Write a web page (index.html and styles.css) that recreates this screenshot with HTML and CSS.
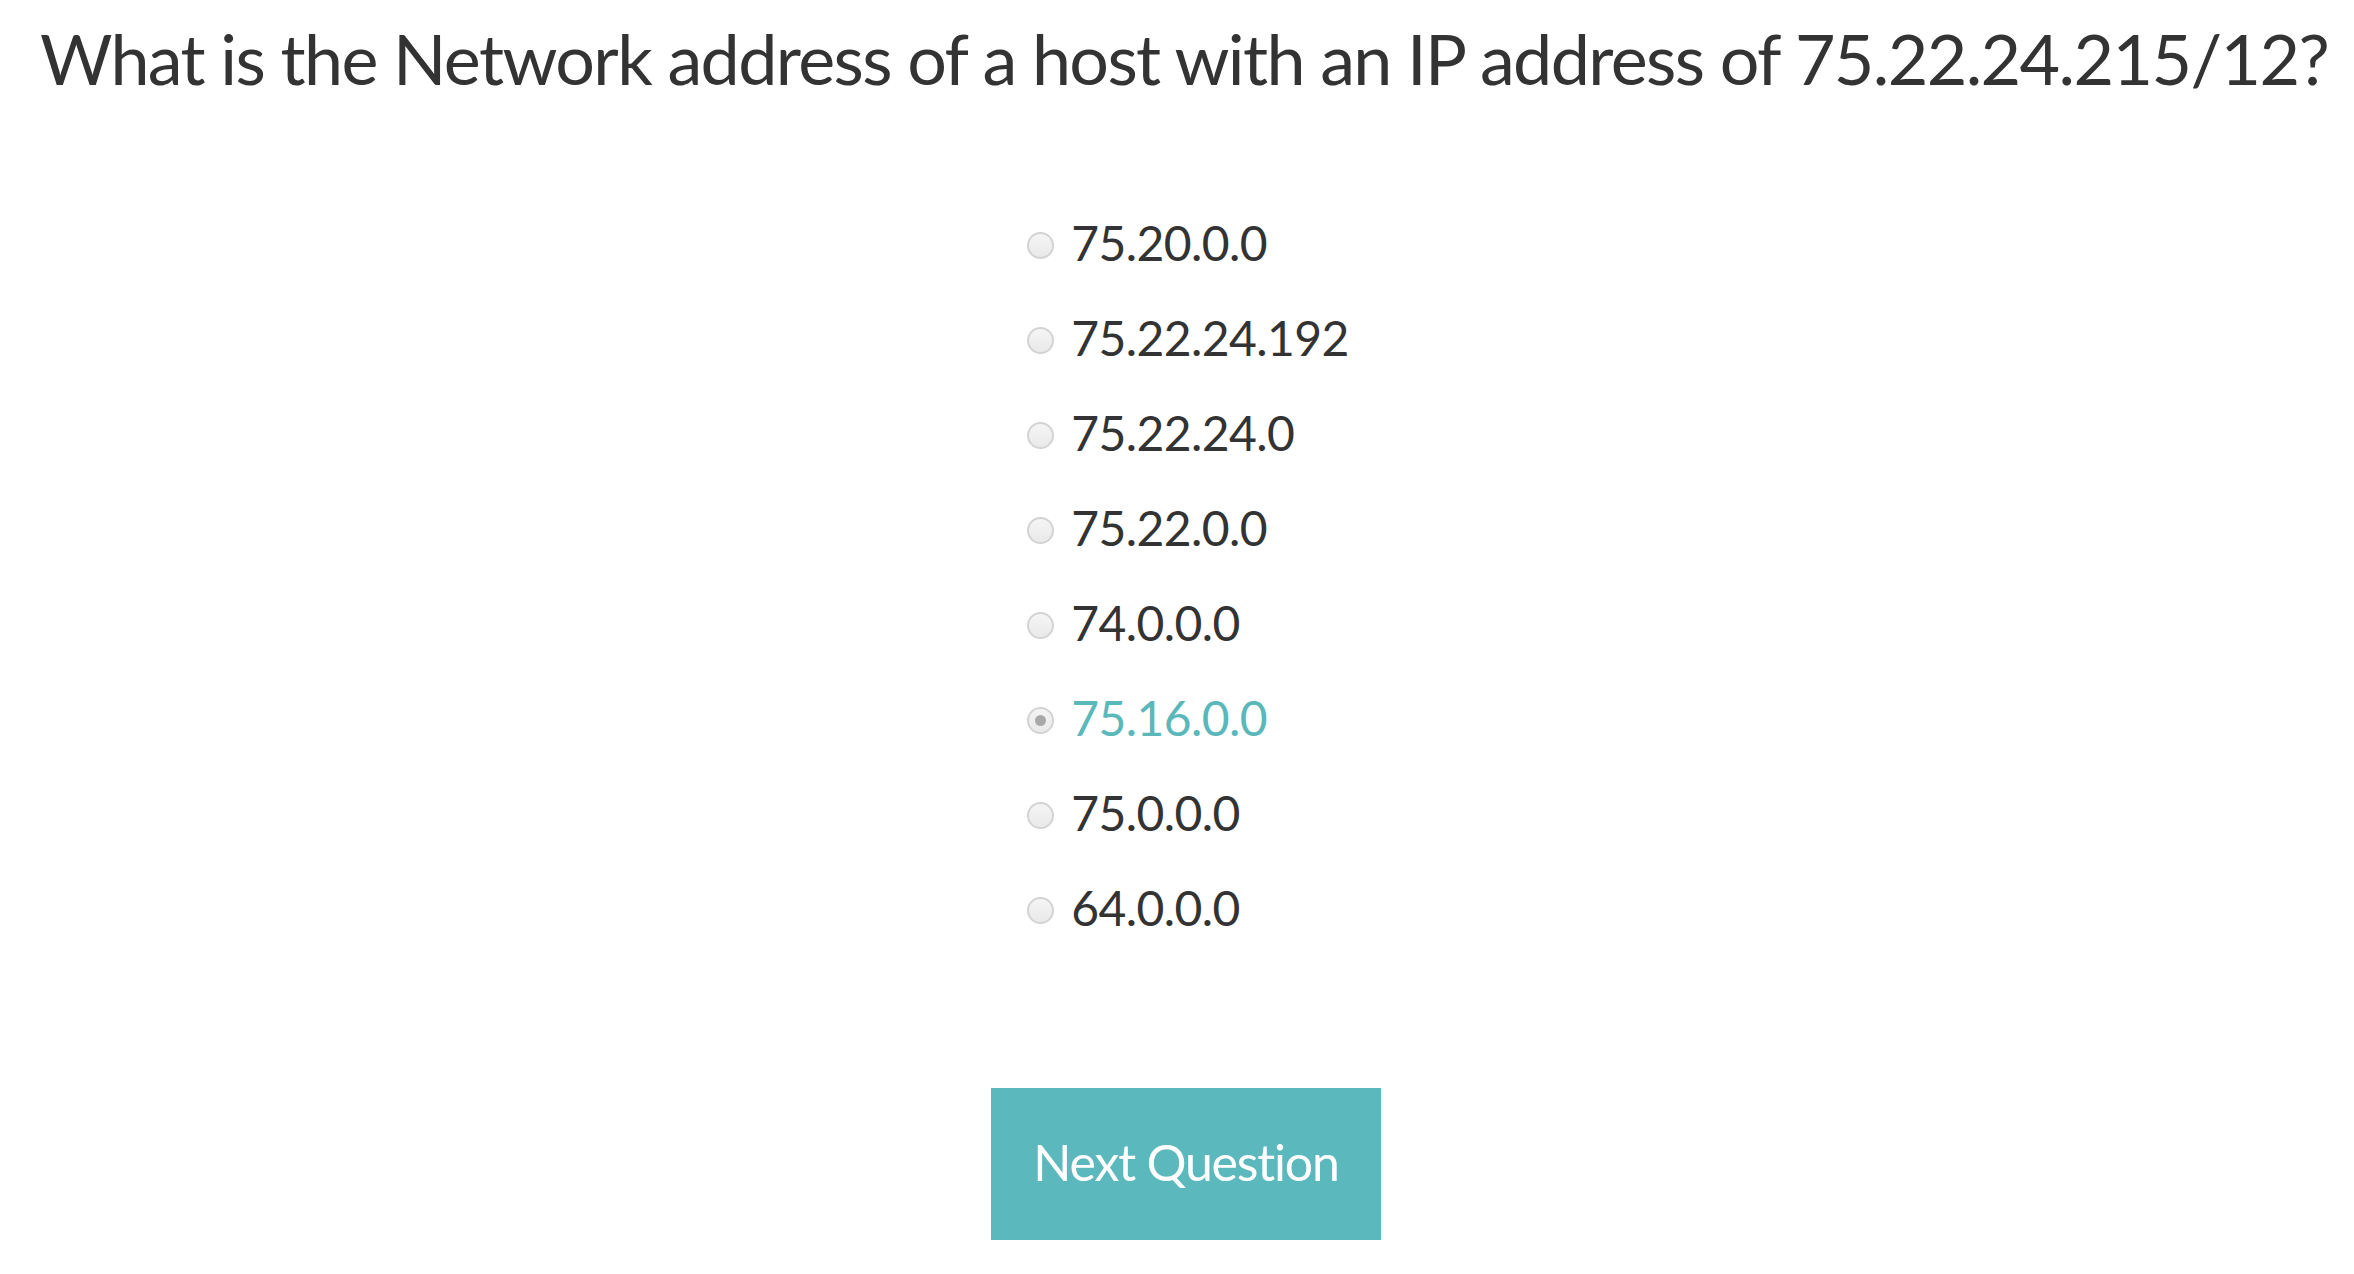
FILE: index.html
```html
<!DOCTYPE html>
<html lang="en">
<head>
<meta charset="utf-8">
<title>Quiz</title>
<link rel="stylesheet" href="styles.css">
</head>
<body>
<main class="quiz">
  <h1 class="question">What is the Network address of a host with an IP address of 75.22.24.215/12?</h1>
  <form class="answers">
    <ul class="options">
      <li><label class="option"><input type="radio" name="answer" class="radio"><span class="label-text">75.20.0.0</span></label></li>
      <li><label class="option"><input type="radio" name="answer" class="radio"><span class="label-text">75.22.24.192</span></label></li>
      <li><label class="option"><input type="radio" name="answer" class="radio"><span class="label-text">75.22.24.0</span></label></li>
      <li><label class="option"><input type="radio" name="answer" class="radio"><span class="label-text">75.22.0.0</span></label></li>
      <li><label class="option"><input type="radio" name="answer" class="radio"><span class="label-text">74.0.0.0</span></label></li>
      <li><label class="option selected"><input type="radio" name="answer" class="radio" checked><span class="label-text">75.16.0.0</span></label></li>
      <li><label class="option"><input type="radio" name="answer" class="radio"><span class="label-text">75.0.0.0</span></label></li>
      <li><label class="option"><input type="radio" name="answer" class="radio"><span class="label-text">64.0.0.0</span></label></li>
    </ul>
    <div class="actions">
      <button type="button" class="next-btn">Next Question</button>
    </div>
  </form>
</main>
</body>
</html>
```
FILE: styles.css
```css
html, body {
  margin: 0;
  padding: 0;
  background: #ffffff;
}

body {
  font-family: "Lato", "Open Sans", sans-serif;
  color: #333333;
}

.quiz {
  padding-left: 14px;
  text-align: center;
}

.question {
  margin: 16px 0 0;
  font-size: 70px;
  font-weight: 400;
  line-height: 84px;
  letter-spacing: -1.62px;
  white-space: nowrap;
  color: #333333;
}

.answers {
  margin: 0;
}

.options {
  list-style: none;
  margin: 114px 0 0 8px;
  padding: 0;
  display: inline-flex;
  flex-direction: column;
  gap: 37px;
  text-align: left;
}

.option {
  display: flex;
  align-items: center;
  gap: 17px;
  height: 58px;
  font-size: 48px;
  line-height: 58px;
  letter-spacing: -0.6px;
  color: #333333;
  cursor: pointer;
}

.option.selected {
  color: #5ab8bb;
}

.radio {
  appearance: none;
  -webkit-appearance: none;
  margin: 5px 0 0;
  width: 27px;
  height: 27px;
  flex: 0 0 27px;
  box-sizing: border-box;
  border-radius: 50%;
  border: 2px solid #d3d3d3;
  background: linear-gradient(#f5f5f5, #e9e9e9);
  display: flex;
  align-items: center;
  justify-content: center;
}

.radio:checked::after {
  content: "";
  width: 11px;
  height: 11px;
  border-radius: 50%;
  background: #a9a9a9;
}

.actions {
  margin-top: 151px;
  padding-left: 4px;
  display: flex;
  justify-content: center;
}

.next-btn {
  margin: 0;
  border: 0;
  border-radius: 0;
  background: #5bb8bc;
  color: #ffffff;
  font-family: "Lato", "Open Sans", sans-serif;
  font-size: 50px;
  font-weight: 400;
  line-height: 60px;
  letter-spacing: -1.2px;
  padding: 44px 42px 48px;
  cursor: pointer;
}
```
